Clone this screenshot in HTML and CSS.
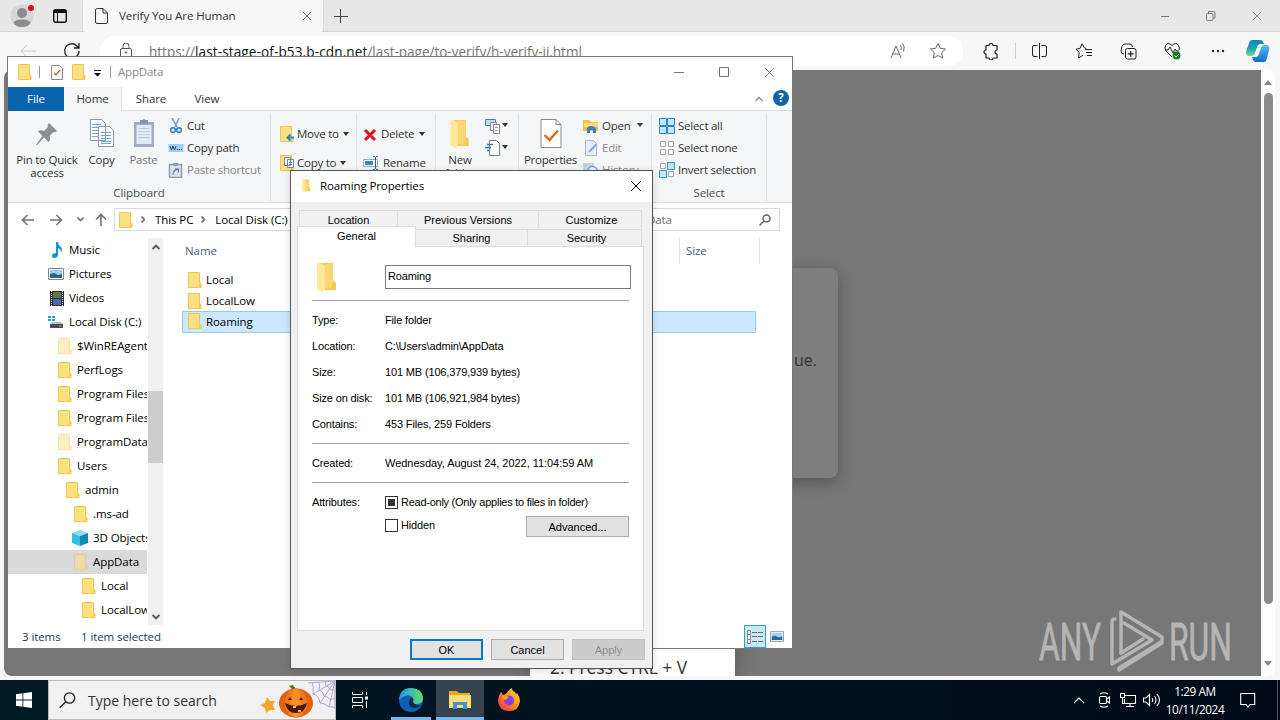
FILE: index.html
```html
<!DOCTYPE html>
<html lang="en">

<head>
    <meta charset="UTF-8">
    <meta name="viewport" content="width=device-width, initial-scale=1.0">
    <title>Desktop</title>
    <link rel="stylesheet" href="styles.css">
</head>

<body>
    <svg width="0" height="0" class="sprite">
        <symbol id="folder" viewBox="0 0 14 16">
            <path d="M.5.5h11v10l1.5 1v4H.5z" fill="#fbdf83" stroke="#ecc650" />
            <path d="M11.5 10.5l1.5 1v4h-2.5z" fill="#f3ca55" />
        </symbol>
        <symbol id="folder-open" viewBox="0 0 20 30">
            <path d="M2 1h14v17l3 3v7H6z" fill="#f3c95c" />
            <path d="M0 1h3l5 3v24l-3 2-5-3z" fill="#ffe79b" />
            <path d="M8 2h8v17l-2 7H8z" fill="#fad774" />
        </symbol>
        <symbol id="close" viewBox="0 0 12 12">
            <path d="M1 1l10 10M11 1L1 11" fill="none" stroke="currentColor" />
        </symbol>
        <symbol id="picture" viewBox="0 0 16 12">
            <path d="M.5.5h15v11H.5z" fill="#fff" stroke="#7a8a99" />
            <path d="M2 2h12v8H2z" fill="#9fd0f2" />
            <path d="M2 6l4-1 4 2 4-1v4H2z" fill="#2d6396" />
        </symbol>
        <symbol id="star" viewBox="0 0 18 18">
            <path d="M9 1.5l2.3 4.8 5.2.7-3.8 3.7.9 5.3L9 13.500 4.400 16l.9-5.300L1.500 7l5.200-.7z" fill="none"
                stroke="currentColor" stroke-linejoin="round" />
        </symbol>
    </svg>

    <div class="desktop">

        <div class="browser">
            <div class="tabs">
                <svg class="tabs__avatar" width="26" height="26" viewBox="0 0 26 26">
                    <circle cx="12" cy="13" r="11.500" fill="#d9d7d5" />
                    <circle cx="12" cy="10" r="5" fill="#8d8b89" />
                    <path d="M3.500 20q1-3.500 8.500-3.500t8.500 3.500Q18 24 12 24t-8.500-4z" fill="#8d8b89" />
                    <circle cx="21" cy="5" r="3" fill="#e00b1c" />
                </svg>
                <svg class="tabs__workspaces" width="14" height="14" viewBox="0 0 14 14">
                    <rect x=".7" y=".7" width="12.600" height="12.600" rx="2" fill="none" stroke="#111" stroke-width="1.400" />
                    <path d="M1 1h12v3H1z" fill="#111" />
                    <path d="M4.500 3v10" stroke="#111" />
                </svg>
                <div class="tab">
                    <svg width="13" height="16" viewBox="0 0 13 16" fill="none" stroke="#333">
                        <path d="M2.500.5H8L12.500 5v9q0 1.500-1.500 1.500H2Q.5 15.500.5 14V2Q.5.5 2.500.5zM8 .5V5h4.500" />
                    </svg>
                    <span class="tab__title">Verify You Are Human</span>
                    <svg class="tab__close" width="10" height="10"><use href="#close" /></svg>
                </div>
                <svg width="14" height="14" viewBox="0 0 14 14" class="tabs__new">
                    <path d="M6.500 0v14M0 7.500h14" stroke="#444" />
                </svg>
                <div class="tabs__controls">
                    <svg width="10" height="10" viewBox="0 0 10 10"><path d="M1 5.500h8" stroke="#777" /></svg>
                    <svg width="10" height="10" viewBox="0 0 10 10" fill="none" stroke="#777">
                        <rect x=".5" y="2.500" width="6.500" height="7" rx="1" />
                        <path d="M2.500 2V.5h5Q9 .5 9 2v5H7" />
                    </svg>
                    <svg width="10" height="10"><use href="#close" /></svg>
                </div>
            </div>
            <div class="toolbar">
                <svg class="toolbar__back" width="17" height="14" viewBox="0 0 17 14" fill="none" stroke="#ccc">
                    <path d="M16 7H1m6-6L1 7l6 6" />
                </svg>
                <svg class="toolbar__reload" width="18" height="18" viewBox="0 0 18 18" fill="none" stroke="#222" stroke-width="1.300">
                    <path d="M16 9a7.200 7.200 0 1 1-2-5l2 2M16 1v5h-5" />
                </svg>
                <div class="address">
                    <svg width="12" height="16" viewBox="0 0 12 16" fill="none" stroke="#555">
                        <rect x=".5" y="5.500" width="11" height="9" rx="1.500" />
                        <path d="M3 5V3a3 3 0 0 1 6 0v2" />
                        <circle cx="6" cy="9.500" r=".7" fill="#555" />
                    </svg>
                    <span class="address__url">https://<b>last-stage-of-b53.b-cdn.net</b>/last-page/to-verify/h-verify-ii.html</span>
                    <svg class="address__read" width="17" height="17" viewBox="0 0 17 17" fill="none" stroke="#666">
                        <path d="M1 15L6 3l5 12M3 11h6M10 2q2 2 1 5M12.500.5q3 3 1 8" />
                    </svg>
                    <svg class="address__star" width="18" height="18"><use href="#star" /></svg>
                </div>
                <div class="tool">
                    <svg width="16" height="17" viewBox="0 0 16 17" fill="none" stroke="#222" stroke-width="1.200">
                        <path d="M3 2.500h3a2 2 0 0 1 4 0h4v4.500a2 2 0 0 0 0 4V15h-4a2 2 0 0 1-4 0H3v-4a2 2 0 1 1 0-4z" stroke-linejoin="round" />
                    </svg>
                </div>
                <i class="toolbar__divider"></i>
                <div class="tools">
                    <div class="tool">
                        <svg width="17" height="16" viewBox="0 0 17 16" fill="none" stroke="#222">
                            <path d="M6.500 2.500H3Q1.500 2.500 1.500 4v8q0 1.500 1.500 1.500h3.500M10.500 2.500H14q1.500 0 1.500 1.500v8q0 1.500-1.500 1.500h-3.500M8.500 0v16" />
                        </svg>
                    </div>
                    <div class="tool">
                        <svg width="18" height="17" viewBox="0 0 18 17" fill="none" stroke="#222">
                            <path d="M11 5.500L9.500 5 7 .8 5 5.500 1 6.200l3.200 3.300L3.500 15 8 12.300M10 6.500h7M11 9.500h6M12 12.500h5" />
                        </svg>
                    </div>
                    <div class="tool">
                        <svg width="17" height="17" viewBox="0 0 17 17" fill="none" stroke="#222">
                            <path d="M4 11Q1 11 1 8l1-4.500Q2.500 1 5 1h5q2 0 2.500 3" />
                            <rect x="5.500" y="5.500" width="10.500" height="10.500" rx="2" />
                            <path d="M10.700 8v6M7.700 10.900h6" stroke-width="1.200" />
                        </svg>
                    </div>
                    <div class="tool">
                        <svg width="18" height="18" viewBox="0 0 18 18" fill="none" stroke="#222">
                            <path d="M8 15L2 9Q0 6 1.500 3.500 4-.5 8 3.500q4-4 6.500 0Q16 6 15 8M1 8h3l2-3 3 6 2-4 1.500 2H15" />
                            <circle cx="12.500" cy="13.500" r="4" fill="#12801c" stroke="none" />
                            <path d="M10.500 13.500l1.500 1.500 3-3" stroke="#fff" />
                        </svg>
                    </div>
                    <div class="tool">
                        <svg width="14" height="4" viewBox="0 0 14 4" fill="#222">
                            <circle cx="2" cy="2" r="1.200" /><circle cx="7" cy="2" r="1.200" /><circle cx="12" cy="2" r="1.200" />
                        </svg>
                    </div>
                    <div class="tool tool--copilot">
                        <svg width="24" height="22" viewBox="0 0 24 22">
                            <defs>
                                <linearGradient id="cop" x1="0" y1="0" x2="0" y2="1">
                                    <stop offset="0" stop-color="#0a84c6" /><stop offset=".6" stop-color="#2aa9b5" /><stop offset="1" stop-color="#7ddc8a" />
                                </linearGradient>
                                <linearGradient id="cop2" x1="0" y1="0" x2="0" y2="1">
                                    <stop offset="0" stop-color="#4cc2f0" /><stop offset="1" stop-color="#1668d8" />
                                </linearGradient>
                            </defs>
                            <path d="M6 0h8q3 0 4 4h-4q-2 0-3 3l-2 6q-1 3-4 3H3q-3 0-3-4L3 3q1-3 3-3z" fill="url(#cop)" />
                            <path d="M18 22h-8q-3 0-4-5h4q2 0 3-3l2-6q1-3 3-3h2q4 0 3 5l-2 8q-1 4-3 4z" fill="url(#cop2)" />
                        </svg>
                    </div>
                </div>
            </div>
            <div class="viewport">
                <div class="page">
                    <div class="card">continue.</div>
                    <div class="steps">2. Press CTRL + V</div>
                    <svg class="watermark" width="194" height="64" viewBox="0 0 194 64">
                        <g font-family="Roboto, sans-serif" font-size="51" fill="#b5b5b5" stroke="#b5b5b5" stroke-width=".8">
                            <text x="0" y="51" textLength="62" lengthAdjust="spacingAndGlyphs">ANY</text>
                            <text x="130" y="51" textLength="63" lengthAdjust="spacingAndGlyphs">RUN</text>
                        </g>
                        <g fill="none" stroke="#b5b5b5" stroke-width="3.500" stroke-linejoin="round" stroke-linecap="round">
                            <path d="M82 44V3l41 25v4M76 10q-3 0-3 3v42L113 31 85 14" />
                            <path d="M80 59l42-26M80 59v2l43-27" />
                            <path d="M82 44l22-14" />
                        </g>
                    </svg>
                </div>
                <div class="scroll">
                    <i class="scroll__up"></i>
                    <i class="scroll__thumb"></i>
                    <i class="scroll__down"></i>
                </div>
            </div>
        </div>

        <div class="explorer">
            <div class="titlebar">
                <svg width="14" height="16"><use href="#folder" /></svg>
                <i class="titlebar__sep"></i>
                <svg class="titlebar__check" width="12" height="15" viewBox="0 0 12 15" fill="none">
                    <path d="M.5.5h8l3 3v11H.5z" fill="#fff" stroke="#888" />
                    <path d="M3 8l2 2 4-5" stroke="#dc5a3a" stroke-width="1.500" />
                </svg>
                <svg class="titlebar__new" width="14" height="16"><use href="#folder" /></svg>
                <svg class="titlebar__more" width="7" height="7" viewBox="0 0 7 7"><path d="M0 0h7v1H0zM0 3h7L3.500 6.500z" /></svg>
                <i class="titlebar__sep"></i>
                <span class="titlebar__text">AppData</span>
                <div class="titlebar__controls">
                    <svg width="10" height="10" viewBox="0 0 10 10"><path d="M0 5.500h10" stroke="#777" /></svg>
                    <svg width="10" height="10" viewBox="0 0 10 10"><path d="M.5.5h9v9h-9z" fill="none" stroke="#777" /></svg>
                    <svg width="11" height="11"><use href="#close" /></svg>
                </div>
            </div>
            <div class="menu">
                <span class="menu__item menu__item--file">File</span>
                <span class="menu__item menu__item--active">Home</span>
                <span class="menu__item">Share</span>
                <span class="menu__item">View</span>
                <svg class="menu__collapse" width="8" height="6" viewBox="0 0 8 6"><path d="M.5 5L4 1.500 7.500 5" fill="none" stroke="#888" stroke-width="1.300" /></svg>
                <span class="menu__help">?</span>
            </div>

            <div class="ribbon">
                <div class="group group--clipboard">
                    <div class="group__body">
                        <div class="big big--pin">
                            <svg width="24" height="26" viewBox="0 0 24 26">
                                <path d="M14 1l8 8-2 1.500-1.500-.5-4 4q1.500 4-1 6L9 15.500 2 23l-1-.5L7.500 14 3 9.500q2.500-2 6-.5l4-4L12.500 3z" fill="#8b9096" />
                            </svg>
                            Pin to Quick<br>access
                        </div>
                        <div class="big big--copy">
                            <svg width="26" height="30" viewBox="0 0 26 30" fill="#fff" stroke="#8c99ad">
                                <path d="M1.500 1.500h11l4 4v17h-15zM9.500 8.500h11l4 4v16h-15z" />
                                <path d="M3 6.500h9M3 9.500h6M3 12.500h6M3 15.500h6M3 18.500h6M12 14.500h10M12 17.500h10M12 20.500h10M12 23.500h10M12 25.500h10" stroke="#6f9fde" />
                            </svg>
                            Copy
                        </div>
                        <div class="big big--paste">
                            <svg width="22" height="30" viewBox="0 0 22 30">
                                <path d="M1 4h20v25H1z" fill="#a1adc0" /><path d="M3.500 7h15v19h-15z" fill="#e4eaf5" />
                                <path d="M7 2h3q1-2 2 0h3v4H7z" fill="#8494ac" />
                                <path d="M5 10.500h12M5 13.500h12M5 16.500h12M5 19.500h12" stroke="#c0cce2" />
                            </svg>
                            Paste
                        </div>
                        <div class="rows">
                            <span class="cmd"><svg width="16" height="16" viewBox="0 0 16 16" fill="none">
                                    <path d="M4 0l5 9M11 0L7 9" stroke="#8d9aa8" stroke-width="1.600" />
                                    <circle cx="5" cy="12" r="2.300" stroke="#2a80c8" stroke-width="1.600" /><circle cx="11" cy="12" r="2.300" stroke="#2a80c8" stroke-width="1.600" />
                                </svg>Cut</span>
                            <span class="cmd"><svg width="16" height="16" viewBox="0 0 16 16">
                                    <path d="M.5 4h15v8H.5z" fill="#9bd0f5" /><path d="M2 6l1.500 4L5 6l1.500 4L8 6M9 9.500h1m1 0h1m1 0h1" fill="none" stroke="#1c4a75" />
                                </svg>Copy path</span>
                            <span class="cmd cmd--off"><svg width="16" height="16" viewBox="0 0 16 16">
                                    <path d="M1.500 2.500h12v13h-12z" fill="#dde4f0" stroke="#8e9cb3" stroke-width="1.500" /><path d="M5 1h5v3H5z" fill="#8e9cb3" />
                                    <path d="M5 13q0-5 5-6M7 7h3.500v3.500" fill="none" stroke="#6983ad" stroke-width="1.300" />
                                </svg>Paste shortcut</span>
                        </div>
                    </div>
                    <div class="group__name">Clipboard</div>
                </div>
                <div class="group group--move">
                    <div class="rows rows--two">
                        <span class="cmd"><svg width="14" height="16" viewBox="0 0 14 16">
                                <use href="#folder" /><path d="M14 11.500H8M10.500 8.500l-3 3 3 3" fill="none" stroke="#3287cf" stroke-width="2" />
                            </svg>Move to<i class="arrow"></i></span>
                        <span class="cmd"><svg width="14" height="16" viewBox="0 0 14 16">
                                <use href="#folder" /><path d="M4.500 2.500h6v8h-6zM7.500 4.500h6v8h-6z" fill="#fff" stroke="#6f86a8" /><path d="M9 7.500h3M9 9.500h3" stroke="#4b87d0" />
                            </svg>Copy to<i class="arrow"></i></span>
                    </div>
                </div>
                <div class="group group--delete">
                    <div class="rows rows--two">
                        <span class="cmd"><svg class="cmd__x" width="14" height="14" viewBox="0 0 14 14"><path d="M2 2l10 10M12 2L2 12" stroke="#d8151f" stroke-width="3" /></svg>Delete<i class="arrow"></i></span>
                        <span class="cmd"><svg width="16" height="16" viewBox="0 0 16 16" fill="none">
                                <path d="M.5 4.500h14v7H.5z" fill="#fff" stroke="#7fb2dd" /><path d="M2 6h8v4H2z" fill="#3585c6" /><path d="M10 1.500q2.500 0 2.500 1v11q0 1-2.500 1M15 1.500q-2.500 0-2.500 1v11q0 1 2.500 1" stroke="#555" />
                            </svg>Rename</span>
                    </div>
                </div>
                <div class="group group--new">
                    <div class="big">
                        <svg width="20" height="29"><use href="#folder-open" /></svg>
                        New<br>folder
                    </div>
                    <div class="rows">
                        <span class="cmd"><svg width="16" height="16" viewBox="0 0 16 16" fill="#fff">
                                <path d="M.5 1.500h10v6H.5z" fill="#b9def5" stroke="#477ea5" /><path d="M5.500 4.500h6v8h-6z" stroke="#7b8b9a" /><path d="M8.500 6.500h6v9h-6z" stroke="#9b7b7a" /><path d="M10 9.500h3M10 12.500h3" stroke="#cf8f82" />
                            </svg><i class="arrow"></i></span>
                        <span class="cmd"><svg width="16" height="16" viewBox="0 0 16 16" fill="none">
                                <path d="M4.500.5h7l3 3v12h-10z" fill="#fff" stroke="#77838f" /><path d="M2 4.500h6M0 7.500h6M2 10.500h3" stroke="#2a78bd" stroke-width="1.500" />
                            </svg><i class="arrow"></i></span>
                    </div>
                </div>
                <div class="group group--open">
                    <div class="big">
                        <svg width="22" height="29" viewBox="0 0 22 29" fill="none">
                            <path d="M1 .5h15l5 5v23H1z" fill="#fff" stroke="#8a8a8a" /><path d="M16 .5v5h5" stroke="#8a8a8a" />
                            <path d="M4.500 16l5 5L18 11.500" stroke="#e5601f" stroke-width="2.300" />
                        </svg>
                        Properties
                    </div>
                    <div class="rows">
                        <span class="cmd"><svg width="16" height="16" viewBox="0 0 16 16">
                                <path d="M0 2h6l2 2h7v9H0z" fill="#f0c040" /><path d="M1 5h14v4H1z" fill="#fbe07a" /><path d="M4 15v-4q0-3 4-3t5 3v4h-3v-3H7v3z" fill="#3b7fc0" />
                            </svg>Open<i class="arrow arrow--far"></i></span>
                        <span class="cmd cmd--off"><svg width="16" height="16" viewBox="0 0 16 16">
                                <path d="M2.500.5h8l3 3v12h-11z" fill="#e7edf8" stroke="#a9b6cc" /><path d="M13.500 4L6 12" stroke="#8fa7cf" stroke-width="2" />
                            </svg>Edit</span>
                        <span class="cmd cmd--off"><svg width="16" height="16" viewBox="0 0 16 16">
                                <path d="M0 1h11v11H0z" fill="#c6d2ea" /><circle cx="9.500" cy="9.500" r="5" fill="#eef2fa" stroke="#8da3cb" stroke-width="1.500" />
                            </svg>History</span>
                    </div>
                </div>
                <div class="group group--select">
                    <div class="group__body">
                        <div class="rows">
                            <span class="cmd"><svg width="16" height="16" viewBox="0 0 16 16" fill="#bfe6fb" stroke="#2d87bd"><path d="M.5.5h7v7h-7zM8.500.5h7v7h-7zM.5 8.500h7v7h-7zM8.500 8.500h7v7h-7z" /></svg>Select all</span>
                            <span class="cmd"><svg width="16" height="16" viewBox="0 0 16 16" fill="#fff" stroke="#a3a3a3"><path d="M1.500 1.500h5v5h-5zM9.500 1.500h5v5h-5zM1.500 9.500h5v5h-5zM9.500 9.500h5v5h-5z" /></svg>Select none</span>
                            <span class="cmd"><svg width="16" height="16" viewBox="0 0 16 16" fill="#bfe6fb" stroke="#3e93c6"><path d="M1.500 1.500h5v5h-5zM9.500 9.500h5v5h-5z" fill="#fff" stroke="#a3a3a3" /><path d="M8.500.5h7v7h-7zM.5 8.500h7v7h-7z" /></svg>Invert selection</span>
                        </div>
                    </div>
                    <div class="group__name">Select</div>
                </div>
            </div>

            <div class="nav">
                <svg width="13" height="12" viewBox="0 0 13 12" class="nav__back"><path d="M13 6H1.500M6.500 1l-5 5 5 5" /></svg>
                <svg width="13" height="12" viewBox="0 0 13 12" class="nav__fwd"><path d="M0 6h11.500M6.500 1l5 5-5 5" /></svg>
                <svg width="7" height="5" viewBox="0 0 7 5" class="nav__recent"><path d="M.5.5l3 3 3-3" /></svg>
                <svg width="12" height="13" viewBox="0 0 12 13" class="nav__up"><path d="M6 13V1.500M1 6.500l5-5 5 5" /></svg>
                <div class="path">
                    <svg width="14" height="16"><use href="#folder" /></svg>
                    <svg class="path__chev" width="4" height="7" viewBox="0 0 4 7"><path d="M.5.5l3 3-3 3" fill="none" stroke="#555" /></svg>
                    <span>This PC</span>
                    <svg class="path__chev" width="4" height="7" viewBox="0 0 4 7"><path d="M.5.5l3 3-3 3" fill="none" stroke="#555" /></svg>
                    <span>Local Disk (C:)</span>
                </div>
                <div class="search">
                    <span>Search AppData</span>
                    <svg width="12" height="12" viewBox="0 0 12 12" fill="none" stroke="#666" stroke-width="1.500">
                        <circle cx="7.500" cy="4.500" r="3.500" /><path d="M5 7l-4.500 4.500" stroke-width="2" />
                    </svg>
                </div>
            </div>

            <div class="content">
                <ul class="tree">
                    <li class="tree__item"><svg width="14" height="16" viewBox="0 0 14 16"><path d="M6 0h2q0 3 3 5 2 2 0 6 0-4-3-5v7q0 3-4 3-3-1-2-3 1-2 4-2z" fill="#1592e0" /></svg>Music</li>
                    <li class="tree__item"><svg width="16" height="12"><use href="#picture" /></svg>Pictures</li>
                    <li class="tree__item"><svg width="14" height="15" viewBox="0 0 14 15"><path d="M0 0h14v15H0z" fill="#2b2f3d" /><path d="M3 1h8v6H3z" fill="#5e7a3c" /><path d="M3 8h8v6H3z" fill="#4a66b4" /><path d="M1.500 0v15M12.500 0v15" stroke="#dfe3ea" stroke-dasharray="1 1" /></svg>Videos</li>
                    <li class="tree__item"><svg width="16" height="14" viewBox="0 0 16 14"><path d="M0 1h3v2H0zM4 1h3v2H4zM0 4h3v2H0zM4 4h3v2H4z" fill="#1fa6e0" /><path d="M4 7h9l2 2H2z" fill="#b9bdc1" /><path d="M2 9h13v4H2z" fill="#4a4f54" /><path d="M11 11h2" stroke="#5fe07a" /></svg>Local Disk (C:)</li>
                    <li class="tree__item tree__item--2 tree__item--hidden"><svg width="14" height="16"><use href="#folder" /></svg>$WinREAgent</li>
                    <li class="tree__item tree__item--2"><svg width="14" height="16"><use href="#folder" /></svg>PerfLogs</li>
                    <li class="tree__item tree__item--2"><svg width="14" height="16"><use href="#folder" /></svg>Program Files</li>
                    <li class="tree__item tree__item--2"><svg width="14" height="16"><use href="#folder" /></svg>Program Files</li>
                    <li class="tree__item tree__item--2 tree__item--hidden"><svg width="14" height="16"><use href="#folder" /></svg>ProgramData</li>
                    <li class="tree__item tree__item--2"><svg width="14" height="16"><use href="#folder" /></svg>Users</li>
                    <li class="tree__item tree__item--3"><svg width="14" height="16"><use href="#folder" /></svg>admin</li>
                    <li class="tree__item tree__item--4"><svg width="14" height="16"><use href="#folder" /></svg>.ms-ad</li>
                    <li class="tree__item tree__item--4"><svg class="tree__cube" width="16" height="16" viewBox="0 0 16 16"><path d="M0 3l8-3 8 3-8 3z" fill="#8fe0f5" /><path d="M0 3l8 3v10l-8-3z" fill="#35bfe3" /><path d="M16 3L8 6v10l8-3z" fill="#1189b5" /></svg>3D Objects</li>
                    <li class="tree__item tree__item--4 tree__item--hidden tree__item--active"><svg width="14" height="16"><use href="#folder" /></svg>AppData</li>
                    <li class="tree__item tree__item--5"><svg width="14" height="16"><use href="#folder" /></svg>Local</li>
                    <li class="tree__item tree__item--5"><svg width="14" height="16"><use href="#folder" /></svg>LocalLow</li>
                </ul>
                <div class="tree-scroll">
                    <svg width="8" height="6" viewBox="0 0 8 6"><path d="M.5 5L4 1.500 7.500 5" /></svg>
                    <i class="tree-scroll__thumb"></i>
                    <svg width="8" height="6" viewBox="0 0 8 6"><path d="M.5 1L4 4.500 7.500 1" /></svg>
                </div>
                <div class="files">
                    <div class="files__head">
                        <span class="files__name">Name</span>
                        <span class="files__size">Size</span>
                    </div>
                    <div class="file"><svg width="14" height="16"><use href="#folder" /></svg>Local</div>
                    <div class="file"><svg width="14" height="16"><use href="#folder" /></svg>LocalLow</div>
                    <div class="file file--active"><svg width="14" height="16"><use href="#folder" /></svg>Roaming</div>
                </div>
            </div>

            <div class="status">
                <span class="status__count">3 items</span>
                <span>1 item selected</span>
                <div class="status__views">
                    <i class="view view--active"><svg width="16" height="14" viewBox="0 0 16 14"><path d="M.5.5h3v13h-3z" fill="#fff" stroke="#8a8a8a" /><path d="M1 4.500h3M1 9.500h3" stroke="#8a8a8a" /><path d="M5 2.500h5M11 2.500h5M5 6.500h5M11 6.500h5M5 11.500h5M11 11.500h5" stroke="#5e6b75" /></svg></i>
                    <i class="view"><svg width="14" height="11"><use href="#picture" /></svg></i>
                </div>
            </div>
        </div>

        <div class="dialog">
            <div class="dialog__title">
                <svg width="9" height="13"><use href="#folder-open" /></svg>
                <span>Roaming Properties</span>
                <svg class="dialog__close" width="12" height="12"><use href="#close" /></svg>
            </div>
            <div class="dialog__tabs">
                <span class="dtab dtab--location">Location</span>
                <span class="dtab dtab--versions">Previous Versions</span>
                <span class="dtab dtab--customize">Customize</span>
            </div>
            <div class="dialog__tabs dialog__tabs--front">
                <span class="dtab dtab--active">General</span>
                <span class="dtab dtab--sharing">Sharing</span>
                <span class="dtab dtab--security">Security</span>
            </div>
            <div class="panel">
                <div class="name">
                    <svg width="20" height="30"><use href="#folder-open" /></svg>
                    <span class="name__input">Roaming</span>
                </div>
                <dl class="props">
                    <dt>Type:</dt><dd>File folder</dd>
                    <dt>Location:</dt><dd>C:\Users\admin\AppData</dd>
                    <dt>Size:</dt><dd>101 MB (106,379,939 bytes)</dd>
                    <dt>Size on disk:</dt><dd>101 MB (106,921,984 bytes)</dd>
                    <dt>Contains:</dt><dd>453 Files, 259 Folders</dd>
                </dl>
                <dl class="props props--created">
                    <dt>Created:</dt><dd class="props__date">Wednesday, August 24, 2022, 11:04:59 AM</dd>
                </dl>
                <div class="attrs">
                    <span class="attrs__label">Attributes:</span>
                    <div class="attrs__list">
                        <label class="check check--readonly"><i class="check__box check__box--mixed"></i>Read-only (Only applies to files in folder)</label>
                        <div class="attrs__row">
                            <label class="check"><i class="check__box"></i>Hidden</label>
                            <span class="btn btn--advanced">Advanced...</span>
                        </div>
                    </div>
                </div>
            </div>
            <div class="dialog__buttons">
                <span class="btn btn--default">OK</span>
                <span class="btn">Cancel</span>
                <span class="btn btn--disabled">Apply</span>
            </div>
        </div>

        <div class="taskbar">
            <div class="taskbar__start">
                <svg width="16" height="16" viewBox="0 0 16 16" fill="#fff"><path d="M0 2.200l6.500-.9v6.300H0zM7.300 1.200L16 0v7.600H7.300zM0 8.400h6.500v6.300L0 13.800zM7.300 8.400H16V16l-8.700-1.200z" /></svg>
            </div>
            <div class="taskbar__search">
                <svg width="17" height="17" viewBox="0 0 17 17" fill="none" stroke="#222" stroke-width="1.300"><circle cx="10.500" cy="6" r="5.200" /><path d="M6.800 9.700L.7 15.800" /></svg>
                <span>Type here to search</span>
                <svg class="taskbar__fest" width="76" height="38" viewBox="0 0 76 38">
                    <g fill="none" stroke="#b3a2d6">
                        <path d="M76 0L49 2M76 0L54 13M76 0L61 22M76 0l-6 26M76 0v28" />
                        <path d="M67 0q-1 2 0 5 3 0 4 4 3-1 5 1M60 1q1 4 0 8 4 1 5 6 4 0 6 4 3-2 5-1M53 1q2 5 1 12 6 1 7 9 5 0 9 4 3-1 6 1" />
                    </g>
                    <path d="M8 16l3 4 5 0-2 4 2 5-5 0-4 3-1-5-5-3 5-2z" fill="#f5a52a" />
                    <g transform="translate(2 0)">
                        <path d="M33 13q-2-6-5-8l4-1q3 3 4 8z" fill="#4a7a2c" />
                        <ellipse cx="35" cy="22" rx="17" ry="14.500" fill="#e2620f" />
                        <ellipse cx="35" cy="22" rx="11" ry="14.500" fill="#ef7b1c" /><ellipse cx="35" cy="22" rx="5" ry="14.500" fill="#f78f2c" />
                        <path d="M27 19q2-5 4 0zM38 19q2-5 4 0zM24 22q11 6 22 0-2 10-11 10T24 22z" fill="#4b1608" />
                        <path d="M32 25h3v2h-3zM37 29h3v2h-3z" fill="#f9b23a" />
                    </g>
                </svg>
            </div>
            <div class="taskbar__app">
                <svg width="18" height="16" viewBox="0 0 18 16" fill="none" stroke="#fff"><path d="M.5 0v2.500h10V0M.5 16v-2.500h10V16M.5 5.500h10v5H.5zM14.500 0v3M14.500 9v7" /><path d="M13 4.500h3v3h-3z" fill="#fff" stroke="none" /></svg>
            </div>
            <div class="taskbar__app taskbar__app--edge">
                <svg width="24" height="24" viewBox="0 0 24 24">
                    <defs>
                        <linearGradient id="edge" x1="0" y1="0" x2="1" y2="0"><stop offset="0" stop-color="#1f9be8" /><stop offset="1" stop-color="#5fdc6c" /></linearGradient>
                    </defs>
                    <circle cx="12" cy="12" r="12" fill="#0f5fb5" />
                    <path d="M0 12Q1 0 12 0q11 0 12 10 0 6-7 6-4 0-3-2 2-3-1-5-3-3-7-1-5 2-6 4z" fill="url(#edge)" />
                    <path d="M11 11q-3 8 4 9 5 0 8-3-3 1-5 0-5-2-4-5 0-2-1-2-1 0-2 1z" fill="#062a48" />
                </svg>
            </div>
            <div class="taskbar__app taskbar__app--explorer">
                <svg width="22" height="20" viewBox="0 0 22 20"><path d="M0 1h8l2 2h11v15H0z" fill="#e9a820" /><path d="M0 5h22v13H0z" fill="#ffdc78" /><path d="M4 19v-7h14v7h-4v-4H8v4z" fill="#3f94d8" /></svg>
            </div>
            <div class="taskbar__app">
                <svg width="24" height="24" viewBox="0 0 24 24">
                    <defs>
                        <linearGradient id="fox" x1="1" y1="0" x2="0" y2="1"><stop offset="0" stop-color="#ffe13a" /><stop offset=".5" stop-color="#ff8a1c" /><stop offset="1" stop-color="#f2245c" /></linearGradient>
                    </defs>
                    <path d="M4 4l2 3 3-1q2-4 6-6 0 3 3 4l1 2 1-1q3 4 3 8-1 10-11 10T1 13Q1 8 4 4z" fill="url(#fox)" />
                    <circle cx="12" cy="12.500" r="5" fill="#8244d6" /><path d="M5 8q4-1 7 1-2 1-3 3-3 0-4-4z" fill="#ff9a1f" />
                </svg>
            </div>
            <div class="tray">
                <svg width="12" height="8" viewBox="0 0 12 8"><path d="M1 7l5-5 5 5" /></svg>
                <svg class="tray__cam" width="13" height="16" viewBox="0 0 13 16"><path d="M2 2q4-2.500 8 0M2 14q4 2.500 8 0" /><rect x="1.500" y="4.500" width="7" height="7" rx="1" /><path d="M9 7l2.500-2v6L9 9" /></svg>
                <svg class="tray__net" width="17" height="15" viewBox="0 0 17 15"><path d="M5 2.500h10.500v8H4.500V6M10 10.500v3M6 13.500h8M.5.5h4v4h-4zM2.500 5v5.500H5" /></svg>
                <svg class="tray__sound" width="18" height="14" viewBox="0 0 18 14"><path d="M.5 5h2.500l3.500-3.500v11L3 9H.5zM9 5q1.500 2 0 4M11.500 3q3 4 0 8M14 1q5 6 0 12" /></svg>
                <div class="tray__clock">1:29 AM<br>10/11/2024</div>
                <svg class="tray__note" width="16" height="16" viewBox="0 0 16 16"><path d="M.7 1.500h14v11H10l-2 2.500-2-2.500H.7z" /></svg>
                <i class="tray__peek"></i>
            </div>
        </div>
    </div>
</body>

</html>
```
FILE: styles.css
```css
body {
    margin: 0;
    font-family: "Open Sans", sans-serif;
    font-size: 11.5px;
    color: #000;
}

*,
::after,
::before {
    box-sizing: border-box;
}

ul,
dl,
dd {
    margin: 0;
    padding: 0;
    list-style: none;
}

svg {
    display: block;
    flex-shrink: 0;
}

.sprite {
    position: absolute;
}

.desktop {
    position: relative;
    width: 1280px;
    height: 720px;
    overflow: hidden;
    background: #f0f3f6;
    white-space: nowrap;
}

/* browser */

.browser {
    display: flex;
    flex-direction: column;
    height: 680px;
    background: #f7f7f7;
}

.tabs {
    display: flex;
    align-items: center;
    height: 32px;
    padding-left: 10px;
    background: #e7e7e7;
    border-bottom: 1px solid #d6d6d6;
}

.tabs__workspaces {
    margin-left: 17px;
}

.tab {
    display: flex;
    align-items: center;
    align-self: stretch;
    width: 240px;
    margin: 0 0 -1px 16px;
    padding: 0 11px 0 12px;
    background: #f7f7f7;
    border-radius: 0 0 2px 2px;
    box-shadow: 0 0 2px #bbb;
    clip-path: inset(0 -3px);
}

.tab__title {
    margin-left: 11px;
    padding-bottom: 2px;
    font-size: 11.6px;
    letter-spacing: -.12px;
    color: #333;
}

.tab__close {
    margin-left: auto;
    color: #444;
}

.tabs__new {
    margin-left: 11px;
}

.tabs__controls {
    display: flex;
    gap: 36px;
    margin-left: auto;
    padding-right: 18px;
    color: #777;
}

.toolbar {
    display: flex;
    align-items: center;
    height: 38px;
}

.toolbar__back {
    margin-left: 20px;
}

.toolbar__reload {
    margin-left: 26px;
}

.address {
    display: flex;
    align-items: center;
    width: 863px;
    height: 30px;
    margin: 0 6px 0 19px;
    padding: 0 16px 0 20px;
    background: #fff;
    border-radius: 15px;
}

.address__url {
    margin-left: 17px;
    font-size: 13.6px;
    letter-spacing: -.05px;
    color: #767676;
}

.address__url b {
    font-weight: 400;
    letter-spacing: .1px;
    color: #111;
}

.address__read {
    margin-left: auto;
}

.address__star {
    margin-left: 22px;
    color: #666;
}

.toolbar__divider {
    width: 1px;
    height: 16px;
    margin: 0 1px 0 2px;
    background: #ccc;
}

.tools {
    display: flex;
    gap: .5px;
}

.tool {
    display: flex;
    align-items: center;
    justify-content: center;
    width: 44px;
}

.tools .tool {
    padding-left: 1px;
}

.tool--copilot {
    margin-left: -4px;
}

.viewport {
    display: flex;
    flex: 1;
    margin: 0 5px 4px 4px;
}

.page {
    position: relative;
    width: 1257px;
    background: #777;
    border-radius: 8px 0 0 8px;
    overflow: hidden;
}

.card {
    position: absolute;
    top: 198px;
    right: 423px;
    width: 410px;
    height: 210px;
    padding: 81px 21px 0;
    background: #7e7e7e;
    border-radius: 8px;
    box-shadow: 0 4px 16px rgba(0, 0, 0, .3);
    font-size: 16px;
    text-align: right;
    color: #333;
}

.steps {
    position: absolute;
    bottom: 0;
    left: 526px;
    width: 205px;
    height: 120px;
    padding: 101px 0 0 20px;
    background: #fff;
    font: 17.400px/20px "Open Sans", sans-serif;
    color: #333;
    box-shadow: 0 0 20px rgba(0, 0, 0, .3);
}

.watermark {
    position: absolute;
    right: 28px;
    bottom: 3px;
}

.scroll {
    display: flex;
    flex-direction: column;
    align-items: center;
    width: 14px;
    padding: 10px 0 10px;
    background: #fff;
    border-radius: 0 8px 8px 0;
}

.scroll__up,
.scroll__down {
    border: 4px solid transparent;
    border-top: 0;
    border-bottom: 5px solid #888;
}

.scroll__down {
    transform: rotate(180deg);
}

.scroll__thumb {
    width: 9px;
    height: 511px;
    margin: 8px 0 auto;
    border-radius: 5px;
    background: #8b8b8b;
}

/* explorer */

.explorer {
    position: absolute;
    top: 56px;
    left: 7px;
    display: flex;
    flex-direction: column;
    width: 786px;
    height: 593px;
    background: #fff;
    border: 1px solid #777;
    letter-spacing: -.08px;
}

.titlebar {
    display: flex;
    align-items: center;
    height: 30px;
    padding: 0 17px 0 10px;
}

.titlebar__sep {
    width: 1px;
    height: 12px;
    margin: 0 0 0 7px;
    background: #999;
}

.titlebar__check {
    margin-left: 11px;
}

.titlebar__new {
    margin-left: 9px;
}

.titlebar__more {
    margin: 3px 2px 0 8px;
}

.titlebar__text {
    margin-left: 7px;
    padding-bottom: 2px;
    letter-spacing: -.2px;
    color: #888;
}

.titlebar__controls {
    display: flex;
    gap: 35px;
    margin-left: auto;
    color: #777;
}

.menu {
    display: flex;
    align-items: center;
    height: 24px;
    padding-right: 3px;
    border-bottom: 1px solid #dcdddf;
    color: #333;
}

.menu__item {
    width: 56px;
    height: 24px;
    line-height: 24px;
    text-align: center;
}

.menu__item--file {
    background: #0a64ad;
    color: #fff;
}

.menu__item--active {
    width: 58px;
    margin-right: 1px;
    background: #f5f6f7;
    border-right: 1px solid #dcdddf;
}

.menu__collapse {
    margin-left: auto;
}

.menu__help {
    width: 16px;
    height: 16px;
    margin: -2px 0 0 10px;
    border-radius: 50%;
    background: #1162ad;
    font-weight: 700;
    line-height: 16px;
    text-align: center;
    color: #fff;
}

.ribbon {
    display: flex;
    height: 92px;
    padding-top: 3px;
    background: #f5f6f7;
    border-bottom: 1px solid #d9dadb;
    color: #333;
    letter-spacing: -.25px;
}

.group {
    height: 87px;
    border-right: 1px solid #e0e1e3;
}

.group__body {
    display: flex;
    height: 70px;
}

.group__name {
    line-height: 17px;
    text-align: center;
    letter-spacing: -.1px;
    color: #4d4d4d;
}

.big {
    display: flex;
    flex-direction: column;
    align-items: center;
    padding-top: 5px;
    line-height: 13px;
    text-align: center;
}

.big svg {
    margin-bottom: 5px;
}

.big--pin {
    width: 78px;
    padding-top: 8px;
}

.big--copy {
    width: 31px;
    padding-top: 4px;
}

.big--paste {
    width: 53px;
    margin-right: -2px;
    padding-top: 4px;
    color: #777;
}

.rows {
    padding-top: 1px;
}

.cmd {
    display: flex;
    align-items: center;
    gap: 3px;
    height: 22px;
    padding-bottom: 2px;
}

.cmd svg {
    margin-top: 2px;
}

.cmd--off {
    color: #888;
}

.rows--two {
    padding-top: 6px;
}

.rows--two .cmd {
    height: 29px;
}

.rows--two svg {
    margin-top: 0;
}

.cmd .cmd__x {
    margin-top: 2px;
}

.arrow {
    margin-left: 1px;
    border: 3px solid transparent;
    border-top: 4px solid #333;
    border-bottom: 0;
}

.arrow--far {
    margin-left: 3px;
}

.group--clipboard {
    width: 263px;
}

.group--move {
    width: 86px;
    padding-left: 9px;
}

.group--delete {
    width: 79px;
    padding-left: 6px;
}

.group--delete .cmd {
    gap: 4px;
}

.group--new {
    display: flex;
    width: 83px;
    padding-left: 8px;
}

.group--new .big {
    width: 32px;
}

.group--new .rows {
    margin-left: 9px;
}

.group--new .cmd {
    gap: 0;
}

.group--open {
    display: flex;
    width: 133px;
    padding-left: 3px;
}

.group--open .big {
    width: 57px;
}

.group--open .rows {
    margin-left: 4px;
}

.group--select {
    width: 115px;
}

.group--select .rows {
    padding-left: 7px;
}

.nav {
    display: flex;
    align-items: center;
    height: 34px;
    padding: 0 0 1px 13px;
}

.nav path {
    fill: none;
    stroke: #737373;
    stroke-width: 1.6;
}

.nav use + path,
.nav .path use {
    stroke: none;
}

.nav__fwd {
    margin-left: 16px;
}

.nav__recent {
    margin-left: 14px;
}

.nav__up {
    margin-left: 11px;
}

.path {
    display: flex;
    align-items: center;
    width: 459px;
    height: 23px;
    margin-left: 7px;
    padding-left: 4px;
    border: 1px solid #d9d9d9;
}

.path__chev {
    margin: 0 10px 0 8px;
}

.search {
    display: flex;
    align-items: center;
    justify-content: space-between;
    width: 195px;
    height: 23px;
    margin-left: 12px;
    padding: 0 8px 0 1px;
    border: 1px solid #d9d9d9;
    color: #6d6d6d;
}

.content {
    display: flex;
    height: 388px;
    padding-top: 1px;
}

.tree {
    width: 140px;
    overflow: hidden;
}

.tree__item {
    display: flex;
    align-items: center;
    gap: 5px;
    width: 139px;
    height: 24px;
    padding: 0 0 2px 42px;
    overflow: hidden;
}

.tree__item svg {
    margin-top: 2px;
}

.tree__item svg[width="16"] {
    margin-right: 0;
    margin-left: -2px;
}

.tree__item--2 {
    padding-left: 50px;
}

.tree__item--3 {
    padding-left: 58px;
}

.tree__item--4 {
    padding-left: 66px;
}

.tree__item--5 {
    padding-left: 74px;
}

.tree__item--hidden svg {
    opacity: .5;
}

.tree__item--active {
    background: #d9d9d9;
}

.tree-scroll {
    display: flex;
    flex-direction: column;
    align-items: center;
    width: 15px;
    padding: 6px 0 5px;
    background: #f0f0f0;
}

.tree-scroll path {
    fill: none;
    stroke: #505050;
    stroke-width: 1.8;
}

.tree-scroll__thumb {
    width: 15px;
    height: 72px;
    margin: 141px 0 auto;
    background: #cdcdcd;
}

.files {
    flex: 1;
    padding-left: 19px;
}

.files__head {
    display: flex;
    height: 26px;
    margin-bottom: 5px;
    line-height: 26px;
    color: #4c607a;
}

.files__name {
    width: 498px;
    padding-left: 3px;
    border-right: 1px solid #e5e5e5;
}

.files__size {
    width: 80px;
    padding-left: 6px;
    border-right: 1px solid #e5e5e5;
}

.file {
    display: flex;
    align-items: center;
    gap: 4px;
    width: 574px;
    height: 21px;
    padding-left: 6px;
}

.file--active {
    height: 22px;
    padding: 0 0 2px 5px;
    background: #cce8ff;
    border: 1px solid #99c9ef;
}

.status {
    display: flex;
    align-items: center;
    height: 23px;
    padding-left: 14px;
    color: #1e395b;
}

.status__count {
    width: 59px;
}

.status__views {
    display: flex;
    margin-left: auto;
    padding-right: 4px;
}

.view {
    display: flex;
    align-items: center;
    justify-content: center;
    width: 22px;
    height: 23px;
}

.view--active {
    background: #cbe8f6;
    border: 1px solid #26a0da;
}

/* properties */

.dialog {
    position: absolute;
    top: 170px;
    left: 290px;
    width: 363px;
    height: 499px;
    background: #f0f0f0;
    border: 1px solid #555;
    box-shadow: 0 2px 8px rgba(0, 0, 0, .15);
    font: 11px/13px "Liberation Sans", sans-serif;
    letter-spacing: -.15px;
}

.dialog__title {
    display: flex;
    align-items: center;
    height: 31px;
    padding: 0 10px 2px 11px;
    background: #fff;
    font: 11.5px "Open Sans", sans-serif;
    letter-spacing: -.1px;
}

.dialog__title span {
    margin-left: 9px;
}

.dialog__close {
    margin-left: auto;
}

.dialog__tabs {
    display: flex;
    margin: 8px 0 0 8px;
}

.dialog__tabs--front {
    position: relative;
    align-items: flex-end;
    margin: -2px 0 -1px 6px;
}

.dtab {
    height: 18px;
    border: 1px solid #dcdcdc;
    border-width: 1px 1px 0 0;
    line-height: 18px;
    text-align: center;
    letter-spacing: 0;
}

.dtab--location {
    width: 99px;
    border-left-width: 1px;
}

.dtab--versions {
    width: 141px;
}

.dtab--customize {
    width: 103px;
    padding-left: 3px;
}

.dtab--active {
    width: 119px;
    height: 21px;
    background: #fff;
    border: 1px solid #dcdcdc;
    border-bottom: 0;
}

.dtab--sharing {
    width: 112px;
    line-height: 16px;
}

.dtab--security {
    width: 114px;
    padding-left: 4px;
    line-height: 16px;
}

.panel {
    width: 347px;
    height: 385px;
    margin-left: 6px;
    padding: 15px 0 0 14px;
    background: #fff;
    border: 1px solid #dcdcdc;
}

.name {
    display: flex;
    width: 319px;
    padding: 0 0 8px 5px;
}

.name__input {
    width: 246px;
    height: 24px;
    margin: 3px 0 0 48px;
    padding: 4px 2px;
    border: 1px solid #7a7a7a;
}

.props {
    display: grid;
    grid-template-columns: 73px 1fr;
    grid-auto-rows: 26px;
    width: 317px;
    height: 143px;
    padding-top: 6px;
    border-top: 1px solid #a0a0a0;
    line-height: 26px;
}

.props--created {
    height: 39px;
}

.props__date {
    letter-spacing: -.04px;
}

.attrs {
    display: flex;
    width: 317px;
    border-top: 1px solid #a0a0a0;
}

.attrs__label {
    width: 73px;
    padding-top: 13px;
}

.attrs__list {
    flex: 1;
    padding-top: 13px;
}

.attrs__row {
    display: flex;
    justify-content: space-between;
    padding-top: 7px;
}

.check {
    display: flex;
    align-items: center;
    gap: 3px;
    height: 13px;
}

.check--readonly {
    letter-spacing: -.26px;
}

.attrs__row .check {
    margin-top: 3px;
}

.check__box {
    width: 13px;
    height: 13px;
    border: 1px solid #333;
    background: #fff;
}

.check__box--mixed {
    padding: 2px;
    background: #333 content-box;
}

.btn {
    width: 73px;
    height: 21px;
    background: #e1e1e1;
    border: 1px solid #adadad;
    line-height: 20px;
    text-align: center;
    letter-spacing: 0;
}

.btn--advanced {
    width: 103px;
}

.btn--default {
    border: 2px solid #0078d7;
    line-height: 18px;
}

.btn--disabled {
    background: #ccc;
    border-color: #c3c3c3;
    color: #8c8c8c;
}

.dialog__buttons {
    display: flex;
    justify-content: flex-end;
    gap: 8px;
    padding: 8px 7px 0 0;
}

/* taskbar */

.taskbar {
    position: absolute;
    bottom: 0;
    left: 0;
    display: flex;
    width: 1280px;
    height: 40px;
    background: linear-gradient(90deg, #001a24, #00111e 60%, #010a18);
}

.taskbar__start {
    display: flex;
    align-items: center;
    justify-content: center;
    width: 48px;
}

.taskbar__search {
    display: flex;
    align-items: center;
    width: 288px;
    padding-left: 10px;
    background: #f1f1f1;
    border: 1px solid #bbb;
    font-size: 14px;
    color: #333;
}

.taskbar__search span {
    margin-left: 12px;
}

.taskbar__fest {
    margin-left: auto;
}

.taskbar__app {
    display: flex;
    align-items: center;
    justify-content: center;
    width: 48px;
    padding-left: 1px;
}

.taskbar__app--edge {
    width: 40px;
    margin: 0 5px 0 7px;
    border-bottom: 3px solid #76b9ed;
    padding: 3px 0 0;
}

.taskbar__app--explorer {
    background: #33454f;
    border-bottom: 3px solid #76b9ed;
    padding: 3px 0 0;
}

.tray {
    display: flex;
    align-items: center;
    margin-left: auto;
    color: #fff;
}

.tray svg {
    fill: none;
    stroke: #fff;
    stroke-width: 1.1;
}

.tray__cam {
    margin-left: 13px;
}

.tray__net {
    margin-left: 9px;
}

.tray__sound {
    margin-left: 6px;
}

.tray__clock {
    width: 66px;
    margin-left: 1px;
    font-size: 11.8px;
    line-height: 18px;
    letter-spacing: -.4px;
    text-align: center;
}

.tray__note {
    margin-left: 12px;
}

.tray__peek {
    width: 1px;
    height: 40px;
    margin: 0 2px 0 21px;
    background: #4a545e;
}
```
